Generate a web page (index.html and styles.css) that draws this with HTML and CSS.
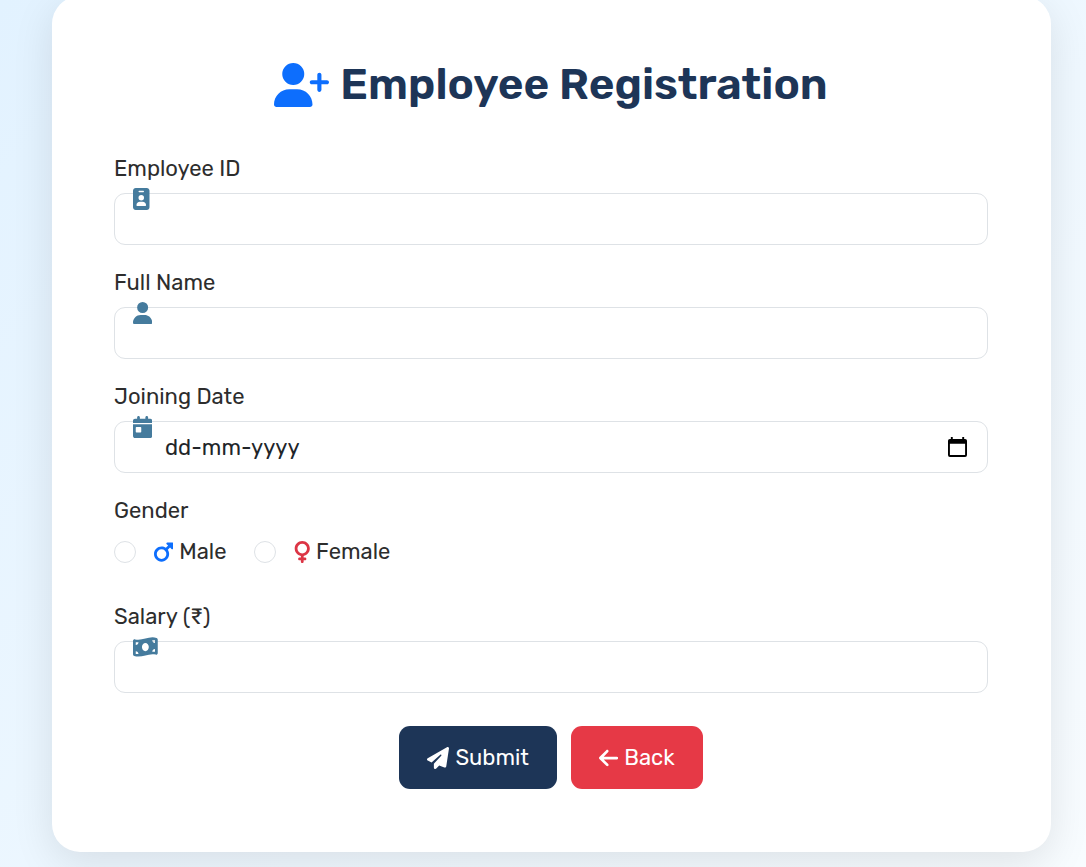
FILE: index.html
```html
<!DOCTYPE html>
<html lang="en">
<head>
<meta charset="utf-8">
<meta name="viewport" content="width=device-width, initial-scale=1">
<title>Employee Registration</title>
<link rel="stylesheet" href="styles.css">
</head>
<body>
<main class="card">
  <h1 class="title">
    <svg class="title-icon" viewBox="0 0 640 512" aria-hidden="true"><path d="M96 128a128 128 0 1 1 256 0A128 128 0 1 1 96 128zM0 482.3C0 383.8 79.8 304 178.3 304l91.4 0C368.2 304 448 383.8 448 482.3c0 16.4-13.3 29.7-29.7 29.7L29.7 512C13.3 512 0 498.7 0 482.3zM504 312l0-64-64 0c-13.3 0-24-10.7-24-24s10.7-24 24-24l64 0 0-64c0-13.3 10.7-24 24-24s24 10.7 24 24l0 64 64 0c13.3 0 24 10.7 24 24s-10.7 24-24 24l-64 0 0 64c0 13.3-10.7 24-24 24s-24-10.7-24-24z"/></svg>
    <span>Employee Registration</span>
  </h1>
  <form class="form">
    <div class="field">
      <label class="label" for="emp-id">Employee ID</label>
      <div class="control">
        <svg class="icon field-icon" viewBox="0 0 384 512" aria-hidden="true"><path d="M64 0C28.700 0 0 28.700 0 64L0 448c0 35.300 28.700 64 64 64l256 0c35.300 0 64-28.700 64-64l0-384c0-35.300-28.700-64-64-64L64 0zm96 320l64 0c44.200 0 80 35.800 80 80c0 8.800-7.200 16-16 16L96 416c-8.800 0-16-7.200-16-16c0-44.200 35.800-80 80-80zm-32-96a64 64 0 1 1 128 0 64 64 0 1 1 -128 0zM144 64l96 0c8.800 0 16 7.200 16 16s-7.200 16-16 16l-96 0c-8.800 0-16-7.200-16-16s7.200-16 16-16z"/></svg>
        <input class="input" id="emp-id" type="text">
      </div>
    </div>
    <div class="field">
      <label class="label" for="full-name">Full Name</label>
      <div class="control">
        <svg class="icon field-icon" viewBox="0 0 448 512" aria-hidden="true"><path d="M224 256A128 128 0 1 0 224 0a128 128 0 1 0 0 256zm-45.700 48C79.800 304 0 383.800 0 482.300C0 498.700 13.300 512 29.700 512l388.600 0c16.400 0 29.700-13.300 29.700-29.700C448 383.800 368.200 304 269.700 304l-91.400 0z"/></svg>
        <input class="input" id="full-name" type="text">
      </div>
    </div>
    <div class="field">
      <label class="label" for="join-date">Joining Date</label>
      <div class="control">
        <svg class="icon field-icon" viewBox="0 0 448 512" aria-hidden="true"><path d="M128 0c17.700 0 32 14.300 32 32l0 32 128 0 0-32c0-17.700 14.300-32 32-32s32 14.300 32 32l0 32 48 0c26.500 0 48 21.500 48 48l0 48L0 160l0-48C0 85.500 21.500 64 48 64l48 0 0-32c0-17.700 14.300-32 32-32zM0 192l448 0 0 272c0 26.500-21.500 48-48 48L48 512c-26.500 0-48-21.500-48-48L0 192zm80 64c-8.800 0-16 7.200-16 16l0 96c0 8.800 7.200 16 16 16l96 0c8.800 0 16-7.200 16-16l0-96c0-8.800-7.200-16-16-16l-96 0z"/></svg>
        <input class="input" id="join-date" type="text" inputmode="numeric" placeholder="dd-mm-yyyy">
        <button class="picker" type="button" aria-label="Open calendar">
          <svg class="picker-icon" viewBox="0 0 20 21" aria-hidden="true"><path fill-rule="evenodd" d="M3 0h2v2h10V0h2v2h1q2 0 2 2v15q0 2-2 2H2q-2 0-2-2V4q0-2 2-2h1zM2 7v12h16V7z"/></svg>
        </button>
      </div>
    </div>
    <fieldset class="field gender">
      <legend class="label">Gender</legend>
      <div class="options">
        <label class="option"><input class="radio" type="radio" name="gender" value="male">
          <span class="option-text"><svg class="icon male" viewBox="0 0 448 512" aria-hidden="true"><path d="M289.800 46.800c3.700-9 12.500-14.800 22.200-14.800l112 0c13.300 0 24 10.700 24 24l0 112c0 9.700-5.800 18.500-14.800 22.200s-19.300 1.700-26.200-5.200l-33.400-33.400L321 204.200c19.500 28.400 31 62.700 31 99.800c0 97.200-78.800 176-176 176S0 401.200 0 304s78.800-176 176-176c37 0 71.400 11.400 99.800 31l52.600-52.600L295 73c-6.900-6.900-8.900-17.200-5.200-26.200zM176 416a112 112 0 1 0 0-224 112 112 0 1 0 0 224z"/></svg>Male</span></label>
        <label class="option"><input class="radio" type="radio" name="gender" value="female">
          <span class="option-text"><svg class="icon female" viewBox="0 0 384 512" aria-hidden="true"><path d="M80 176a112 112 0 1 1 224 0A112 112 0 1 1 80 176zM224 349.100c81.900-15 144-86.800 144-173.100C368 78.800 289.200 0 192 0S16 78.800 16 176c0 86.300 62.100 158.100 144 173.100l0 34.900-32 0c-17.700 0-32 14.300-32 32s14.300 32 32 32l32 0 0 32c0 17.700 14.300 32 32 32s32-14.300 32-32l0-32 32 0c17.700 0 32-14.300 32-32s-14.300-32-32-32l-32 0 0-34.900z"/></svg>Female</span></label>
      </div>
    </fieldset>
    <div class="field">
      <label class="label" for="salary">Salary (₹)</label>
      <div class="control">
        <svg class="icon field-icon" viewBox="0 0 576 512" aria-hidden="true"><path d="M0 112.500L0 422.300c0 18 10.100 35 27 41.300c87 32.500 174 10.300 261-11.900c79.800-20.300 159.600-40.700 239.300-18.900c23 6.300 48.700-9.500 48.700-33.400l0-309.900c0-18-10.100-35-27-41.300C462 15.900 375 38.100 288 60.300C208.200 80.600 128.400 100.900 48.700 79.100C25.600 72.800 0 88.600 0 112.500zM288 352c-44.200 0-80-43-80-96s35.800-96 80-96s80 43 80 96s-35.800 96-80 96zM64 352c35.300 0 64 28.700 64 64l-64 0 0-64zm64-208c0 35.300-28.700 64-64 64l0-64 64 0zM512 304l0 64-64 0c0-35.300 28.700-64 64-64zM448 96l64 0 0 64c-35.300 0-64-28.700-64-64z"/></svg>
        <input class="input" id="salary" type="text" inputmode="decimal">
      </div>
    </div>
    <div class="actions">
      <button class="button submit" type="submit"><svg class="icon" viewBox="0 0 512 512" aria-hidden="true"><path d="M498.100 5.600c10.100 7 15.400 19.100 13.500 31.200l-64 416c-1.500 9.700-7.400 18.200-16 23s-18.900 5.400-28 1.600L284 427.700l-68.500 74.100c-8.900 9.700-22.900 12.900-35.200 8.100S160 493.200 160 480l0-83.600c0-4 1.500-7.800 4.200-10.800L331.800 202.800c5.800-6.300 5.600-16-.4-22s-15.700-6.400-22-.7L106 360.800 17.700 316.600C7.100 311.300 .3 300.700 0 288.900s5.900-22.800 16.100-28.700l448-256c10.700-6.100 23.900-5.500 34 1.400z"/></svg>Submit</button>
      <a class="button back" href="#"><svg class="icon" viewBox="0 0 448 512" aria-hidden="true"><path d="M9.400 233.400c-12.500 12.500-12.500 32.800 0 45.300l160 160c12.500 12.500 32.800 12.500 45.300 0s12.500-32.800 0-45.300L109.200 288 416 288c17.700 0 32-14.300 32-32s-14.300-32-32-32l-306.700 0L214.600 118.600c12.500-12.500 12.500-32.800 0-45.300s-32.800-12.500-45.300 0l-160 160z"/></svg>Back</a>
    </div>
  </form>
</main>
</body>
</html>
```

FILE: styles.css
```css
* {
  box-sizing: border-box;
}

body {
  margin: 0;
  padding: 0 35px 15px 52px;
  min-height: 100vh;
  background: linear-gradient(135deg, #e2f2ff, #f8fcff);
  color: #2d2d2d;
  font-family: Rubik, Roboto, "Noto Sans", sans-serif;
  font-size: 22px;
  line-height: 33px;
}

.card {
  margin-top: -4px;
  padding: 62px 63px 63px 62px;
  border-radius: 28px;
  background: #fff;
  box-shadow: 0 11px 42px rgba(0, 0, 0, 0.1);
}

.title {
  display: flex;
  align-items: center;
  justify-content: center;
  gap: 11px;
  margin: 0 0 41px;
  color: #1d3557;
  font-size: 44px;
  font-weight: 600;
  line-height: 53px;
}

.title-icon {
  height: 44px;
  fill: #0d6efd;
}

.icon {
  height: 22px;
  fill: currentColor;
}

.form,
.field {
  display: flex;
  flex-direction: column;
}

.form {
  gap: 21px;
}

.field {
  gap: 8px;
}

.label {
  padding: 0;
}

.control {
  position: relative;
  display: flex;
}

.field-icon {
  position: absolute;
  top: -5px;
  left: 19px;
  color: #457b9d;
}

.input {
  width: 100%;
  height: 52px;
  padding: 0 50px;
  border: 1px solid #dee2e6;
  border-radius: 11px;
  background: transparent;
  color: #212529;
  font: inherit;
}

.input::placeholder {
  color: #212529;
  opacity: 1;
}

.picker {
  position: absolute;
  top: 10px;
  right: 15px;
  display: grid;
  place-items: center;
  width: 32px;
  height: 32px;
  padding: 0;
  border: 0;
  background: none;
}

.picker-icon {
  width: 19px;
  height: 20px;
}

.gender {
  display: block;
  min-width: 0;
  margin: 0 0 11px;
  padding: 0;
  border: 0;
}

.options {
  display: flex;
  gap: 27px;
  margin-top: 8px;
}

.option {
  display: flex;
  align-items: center;
  gap: 18px;
}

.option-text {
  display: flex;
  align-items: center;
  gap: 6px;
}

.radio {
  appearance: none;
  width: 22px;
  height: 22px;
  margin: 0;
  border: 1px solid #dee2e6;
  border-radius: 50%;
}

.radio:checked {
  border: 7px solid #0d6efd;
}

.male {
  color: #0d6efd;
}

.female {
  color: #dc3545;
}

.actions {
  display: flex;
  justify-content: center;
  gap: 14px;
  margin-top: 12px;
}

.button {
  display: flex;
  align-items: center;
  gap: 6px;
  padding: 15px 28px;
  border: 0;
  border-radius: 11px;
  color: #fff;
  font: inherit;
  text-decoration: none;
}

.submit {
  background: #1d3557;
}

.back {
  background: #e63946;
}
```
